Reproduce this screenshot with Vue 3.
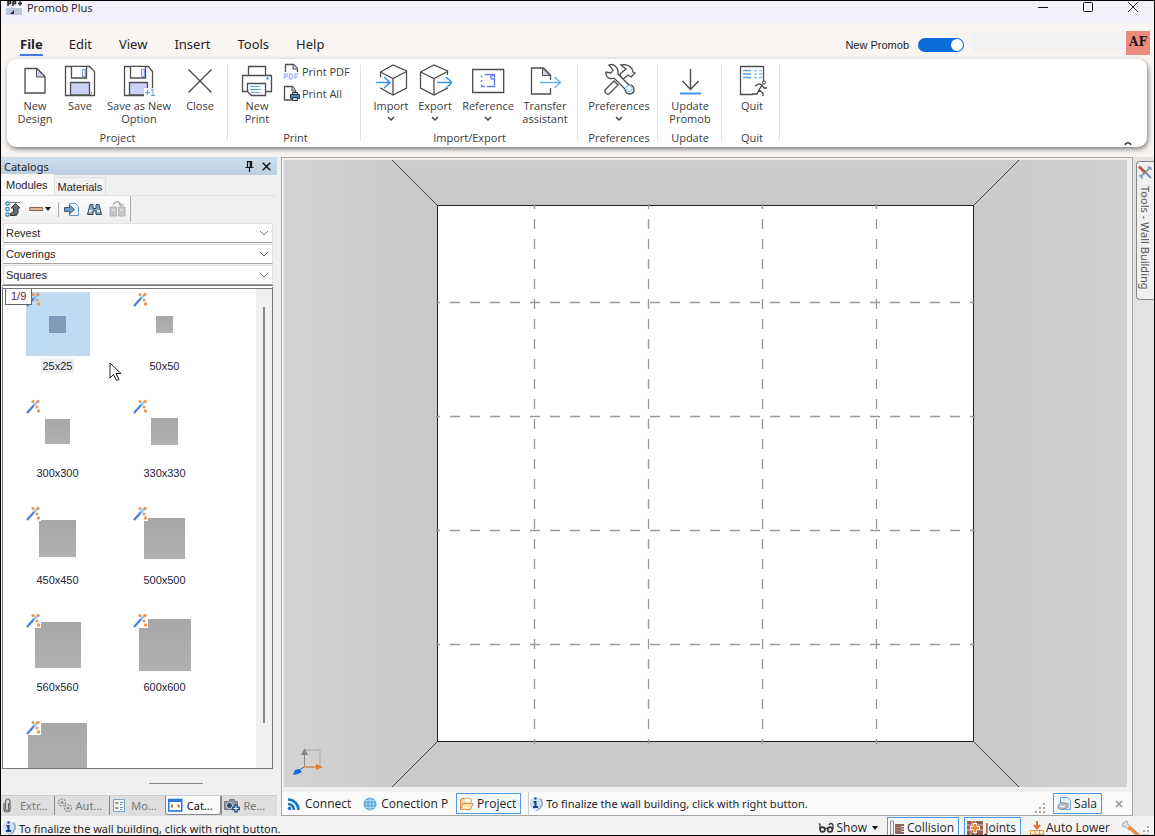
<script setup>
import { ref } from 'vue'

const G = 'fill="#fff" stroke="#4d4d4d" stroke-width="1.3"'
const icons = {
  newDesign: `<path d="M6 3.500h12l8 8v16.500H6z" ${G}/><path d="M17.500 3.500v8.500h8.500z" fill="#ccd0f6" stroke="#4d4d4d"/>`,
  save: `<path d="M1.500 1.500h24l5 5v24h-29z" ${G}/><path d="M7.500 2v11h15V2" ${G}/><path d="M18.500 4.500h3v7h-3z" fill="#e3e8ff" stroke="#7f96ea"/><path d="M6.500 30V17.500h19V30z" fill="#ccd0f6" stroke="#4d4d4d" stroke-width="1.300"/><path d="M27.500 27v2" stroke="#4b8df0"/>`,
  saveAs: `<path d="M1.500 1.500h24l4 5v24h-28z" ${G}/><path d="M7.500 2v11h15V2" ${G}/><path d="M18.500 4.500h3v7h-3z" fill="#e3e8ff" stroke="#7f96ea"/><path d="M6.500 30V17.500h18V30z" fill="#ccd0f6" stroke="#4d4d4d" stroke-width="1.300"/><path d="M21 23h11v9H21z" fill="#fff"/><path d="M22 27.500h5M24.500 25v5M28 25.500l2-1.500v7M28 30.500h4" fill="none" stroke="#4f9be8"/>`,
  close: `<path d="M4.500 4.500l23 23M27.500 4.500l-23 23" stroke="#4d4d4d" stroke-width="1.400"/>`,
  print: `<path d="M7.500 11V1.500h17V11" ${G}/><path d="M1.500 10.500h29v16h-29z" ${G}/><path d="M6.500 18.500h18v12h-14l-4-4z" ${G}/><path d="M9 21.500h10M9 24.500h11M10 27.500h9" stroke="#5aa2ea" stroke-width="1.200"/><circle cx="26.500" cy="13.500" r="1.200" fill="#4a90e2"/>`,
  pdf: `<path d="M2.500 9V1.500h8l4 4V9" ${G}/><path d="M10 1.500v4.500h5" fill="#ccd0f6" stroke="#4d4d4d"/><path d="M1.500 16v-5h2.500v2.500H1.500M6.500 11v5h1.500l1.500-1v-3l-1.500-1zM12 16v-5h3.500M12 13.500h3" fill="none" stroke="#b3bbf5" stroke-width="1.500"/>`,
  printAll: `<path d="M1.500 1.500h8l3 4V15H1.500z" ${G}/><path d="M9 1.500v4.500h4" fill="#ccd0f6" stroke="#4d4d4d"/><path d="M7.500 9.500h9v4h-9z" fill="#4a90c8" stroke="#333"/><path d="M9.500 7.500h5v2h-5zM9.500 12.500h5v3h-5z" fill="#b8dcf5" stroke="#333"/>`,
  import: `<g transform="translate(0 -2)"><path d="M5.500 9L18 2l13.500 6v17L18 32 5.500 25zM5.500 9L18 15.500l13.500-7M18 15.500V32" ${G}/><path d="M4 14.500h3v10H4z" fill="#fff"/><path d="M1 19.500h13.500M9 14l6 5.500-6 5.500" fill="none" stroke="#4292ee" stroke-width="1.600"/></g>`,
  export: `<g transform="translate(0 -2)"><path d="M1.500 9L15 2l13.500 6v17L15 32 1.500 25zM1.500 9L15 15.500l13.500-7M15 15.500V32" ${G}/><path d="M26 12h4v13h-4z" fill="#fff"/><path d="M18 19.500h14M27 14l6 5.500-6 5.500" fill="none" stroke="#4292ee" stroke-width="1.600"/></g>`,
  reference: `<path d="M.700 4.500h31v23h-31z" ${G}/><g fill="none" stroke="#647df0" stroke-width="1.300"><path d="M13 9.500h9.500V14h-3l-1-2 1-1.500h3M9.500 10.500v2M9.500 15v2M9.500 19.500v2H13M15 21.500h7.500V14"/></g>`,
  transfer: `<path d="M21.500 15v-5l-7-7H2.500v26h19v-6" ${G}/><path d="M13.500 3v7.500h7.500z" fill="#ccd0f6" stroke="#4d4d4d"/><path d="M11 17.500h20M25.500 12l6 5.500-6 5.500" fill="none" stroke="#6ab0ec" stroke-width="1.400"/>`,
  prefs: `<g transform="translate(0 -2)"><path d="M2 27l9-9 4 4-9 9c-2 1-5-2-4-4zM17 11l6-5-5-4c4-1 8 0 11 4l1 3 2 1-4 4-3-2-6 5z" ${G}/><path d="M6 2l4 5-2 3-5-1c-1 5 4 8 8 6l11 11c0 3 2 5 5 5 6-1 5-9-1-9L15 11C16 5 11 0 6 2z" ${G}/><circle cx="26" cy="25.500" r="3.300" fill="#eaf4ff" stroke="#74b5ee"/></g>`,
  update: `<path d="M16.500 4v20M8.500 16l8 8.500 8-8.500" fill="none" stroke="#4d4d4d" stroke-width="1.400"/><path d="M6 28.500h21" stroke="#4292ee" stroke-width="2"/>`,
  quit: `<path d="M17 29.500H4.500V1.500h23V16" ${G}/><path d="M7 5.500h8M7 9h8M7 12.500h8" stroke="#5aa2ea" stroke-width="1.600"/><path d="M18 5.500h3M18 9h3M18 12.500h3M23 5.500h3M23 9h3M23 12.500h3" stroke="#8fc0f2" stroke-width="1.600"/><circle cx="28" cy="17.500" r="1.600" fill="none" stroke="#444"/><path d="M19 21l4-2 3 1-3 5 4 3v3M23 25l-2 4h-5M26 20l2 3h3" fill="none" stroke="#444" stroke-width="1.300"/>`,
  wand: `<path d="M1 14L9 5" stroke="#4a7be0" stroke-width="2.200"/><path d="M8 6.500L11 3" stroke="#8fc8ee" stroke-width="2.200"/><g fill="#e8975a"><circle cx="7" cy="2.500" r="1.600"/><circle cx="12" cy="2.500" r="1.700"/><circle cx="11" cy="8" r="1.500"/><circle cx="12.500" cy="12" r="1.700"/></g>`,
  info: `<path d="M8 13l-2 3 5-3z" fill="#9db6d8"/><circle cx="7" cy="7.500" r="6.500" fill="#d3dff0"/><path d="M11.500 2.500c3 4 2 8-2 11" fill="none" stroke="#7f9cc4" stroke-width="1.500"/><path d="M4.500 6h2v5M4 11h5M5.500 2.500h2" fill="none" stroke="#173f8c" stroke-width="2"/>`,
  feed: `<g fill="none" stroke="#1876c4" stroke-width="2.600"><path d="M1 2.500a10.500 10.500 0 0 1 10.500 10.500M1 7a6 6 0 0 1 6 6"/></g><circle cx="2.500" cy="11.500" r="1.800" fill="#1876c4"/>`,
  globe: `<circle cx="7" cy="7" r="6.500" fill="#58a9dd"/><path d="M7 0v14M0 7h14M2 3.500h10M2 10.500h10M7 .500c-5 4-5 9 0 13M7 .500c5 4 5 9 0 13" fill="none" stroke="#b5ddf4" stroke-width=".800"/>`,
  folder: `<path d="M1.500 12V3l1-1.500h4L8 3h4v3" fill="#f6d9a8" stroke="#c98b3f"/><path d="M5 4V1.500h7V6" fill="#fff" stroke="#d8b27c"/><path d="M1.500 12.500L4 6.500h10l-2.500 6z" fill="#ffe6b5" stroke="#d08f40"/>`,
  page: `<path d="M4.500 1.500h7l3 3v9h-10z" fill="#e5f0fb" stroke="#6f9ed2"/><path d="M2 9.500l3-3 7 1v4l-7 2-3-1.500z" fill="#b9bec6" stroke="#8792a0"/><path d="M4 10l5 1" stroke="#fff"/>`,
  clip: `<path d="M3 5v6c0 4 6 4 6 0V4C9 0 4.500 0 4.500 4v7c0 2 3 2 3 0V5" fill="none" stroke="#666" stroke-width="1.200"/>`,
  gears: `<g fill="#ddd" stroke="#8f8f8f" stroke-width="1.200"><circle cx="5" cy="4.500" r="3.500" stroke-dasharray="2 1"/><circle cx="5" cy="4.500" r="1"/><circle cx="11" cy="10" r="3.500" stroke-dasharray="2 1"/><circle cx="11" cy="10" r="1"/></g>`,
  modules: `<path d="M1.500 1.500h11v12h-11z" fill="#eef6fc" stroke="#7ba7cc"/><path d="M3.500 4h2.500v2H3.500zM3.500 9h2.500v2H3.500z" fill="#c07c5a"/><path d="M8 4.500h3M8 6.500h2M8 9.500h3M8 11.500h2" stroke="#7c92a8"/>`,
  catalog: `<path d="M.800 1.500h13v11.500h-13z" fill="#fff" stroke="#1e6fd0" stroke-width="1.400"/><path d="M.500 1h13.500v3H.500z" fill="#2b7ad8"/><path d="M3 7l2-1v3l-2 1zM9.500 6l2 1v3l-2-1z" fill="#a97650"/>`,
  render: `<path d="M.500 3.500h5v-2h5v2h3v8H.500z" fill="#8b959f" stroke="#747d86"/><circle cx="5.500" cy="7.500" r="3" fill="#345" stroke="#dde"/><path d="M8 10.500h8M12 6.500v8" stroke="#175a96" stroke-width="3.600"/><path d="M9.500 10.500h5M12 8v5" stroke="#fff"/>`,
  glasses: `<path d="M2 8V3.500l-1-1M11 4c1-2 3-2 4 0v4" fill="none" stroke="#333" stroke-width="1.300"/><circle cx="4.500" cy="8.500" r="2.400" fill="none" stroke="#333" stroke-width="1.600"/><circle cx="12" cy="8.500" r="2.400" fill="none" stroke="#333" stroke-width="1.600"/><path d="M7 8l2.500-1" stroke="#333" stroke-width="1.300"/>`,
  collision: `<path d="M.500 1h3v14h-3z" fill="#eee" stroke="#999"/><path d="M5 4h9v10H5z" fill="#8e675c"/><path d="M11 6.500h3M11 9h3M11 11.500h3" stroke="#e8d9d3"/><path d="M5 7.500h6M5 10.500h6" stroke="#b08a7e"/>`,
  joints: `<path d="M0 1h16v14H0z" fill="#96604d"/><path d="M0 5h16M0 10h16M5 1v4M11 5v5M4 10v5M8 1v14" stroke="#e3c7b8"/><path d="M3 8h10M8 3v10" stroke="#fff" stroke-width="4"/><path d="M4 8h8M8 4v8" stroke="#ee8237" stroke-width="2.600"/>`,
  lower: `<path d="M7 0v7M4 4l3 3.500L10 4" fill="none" stroke="#df7334" stroke-width="2"/><path d="M.500 9.500h13v4H.500zM5 9.500v4M9.500 9.500v4" fill="#fff2e2" stroke="#e39a4d" stroke-width="1.200"/>`,
  wrench: `<path d="M1 3l4-2 1 3 3 4-2 2-4-3-3-1z" fill="#dedede" stroke="#aaa"/><path d="M8 8l7 6" stroke="#ed8b3c" stroke-width="3.600" stroke-linecap="round"/>`,
  tools: `<path d="M2 12L13 2" stroke="#8ca0c4" stroke-width="2.200"/><path d="M6 6l7 7" stroke="#7d8ba6" stroke-width="1.800"/><path d="M1 1.500L7 7.500" stroke="#b8562c" stroke-width="2.600"/><path d="M10 1l1 3h3M1 10.500l3 .500v3" fill="none" stroke="#8ca0c4" stroke-width="1.500"/>`,
  tree: `<g fill="#fff" stroke="#2a82b8" stroke-width="1.200"><circle cx="2.500" cy="2.500" r="1.700"/><circle cx="2.500" cy="8" r="1.700"/><circle cx="2.500" cy="13.500" r="1.700"/></g><path d="M5 1.500h10M5 14.500h7" stroke="#777"/><path d="M10.500 2.500l4.500 4.500h-2v5.500l-3 2H5.500v-2c2.500-.500 3-2 3-3.500V7H6z" fill="#6c6c6c" stroke="#3a3a3a"/>`,
  board: `<path d="M.700 2.500h13v3h-13z" fill="#e2b49c" stroke="#8f6450"/>`,
  enter: `<path d="M5.500 1.500h6l3 3v9h-9z" fill="#f2f8fd" stroke="#5b9acb"/><path d="M.500 5.500h5V3l5 4.500-5 4.500V9.500h-5z" fill="#6f9cba" stroke="#35607f"/>`,
  find: `<path d="M3 2.500h3v4h3v-4h3l2.500 10H9V9H6v3.500H.500z" fill="#8fa5b8" stroke="#2f4558"/><path d="M2 9h3M10 9h3" stroke="#fff" stroke-width="1.400"/>`,
  swap: `<path d="M1 6h6.500v9H1zM9.500 6H16v9H9.500z" fill="#c6c6c6" stroke="#b4b4b4"/><path d="M4 4c2-4 7-4 8 .500M10 3l2 2 2.500-2" fill="none" stroke="#b5b5b5" stroke-width="1.500"/><path d="M3 9h3M11 9h3" stroke="#eee"/>`
}

const menus = ['File', 'Edit', 'View', 'Insert', 'Tools', 'Help']
const active = ref('File')
const groups = [
  { name: 'Project', cls: 'g-project', items: [
    { t: ['New', 'Design'], icon: 'newDesign', w: 'w54' },
    { t: ['Save'], icon: 'save', w: 'w36' },
    { t: ['Save as New', 'Option'], icon: 'saveAs', w: 'w82' },
    { t: ['Close'], icon: 'close', w: 'w40' }] },
  { name: 'Print', cls: 'g-print', items: [{ t: ['New', 'Print'], icon: 'print', w: 'w46' }],
    small: [{ t: 'Print PDF', icon: 'pdf' }, { t: 'Print All', icon: 'printAll' }] },
  { name: 'Import/Export', cls: 'g-io', items: [
    { t: ['Import'], icon: 'import', w: 'w44', drop: true },
    { t: ['Export'], icon: 'export', w: 'w44', drop: true },
    { t: ['Reference'], icon: 'reference', w: 'w62', drop: true },
    { t: ['Transfer', 'assistant'], icon: 'transfer', w: 'w52' }] },
  { name: 'Preferences', cls: 'g-pref', items: [{ t: ['Preferences'], icon: 'prefs', w: 'w70', drop: true }] },
  { name: 'Update', cls: 'g-update', items: [{ t: ['Update', 'Promob'], icon: 'update', w: 'w54' }] },
  { name: 'Quit', cls: 'g-quit', items: [{ t: ['Quit'], icon: 'quit', w: 'w46' }] }
]
const filters = ['Revest', 'Coverings', 'Squares']
const modules = [
  { n: '25x25', s: 17 }, { n: '50x50', s: 17 },
  { n: '300x300', s: 25 }, { n: '330x330', s: 27 },
  { n: '450x450', s: 37 }, { n: '500x500', s: 41 },
  { n: '560x560', s: 46 }, { n: '600x600', s: 52 },
  { n: '', s: 59 }
]
const selected = ref('25x25')
const dockTabs = [
  { n: 'Extr...', icon: 'clip' }, { n: 'Aut...', icon: 'gears' }, { n: 'Mo...', icon: 'modules' },
  { n: 'Cat...', icon: 'catalog', on: true }, { n: 'Re...', icon: 'render' }
]
const newUi = ref(true)
const hint = 'To finalize the wall building, click with right button.'
const columns = [250.5, 364.5, 478.5, 592.5]
const rows = [142.5, 256.5, 370.5, 484.5]
</script>

<template>
  <div class="window">
    <header class="top">
      <div class="titlebar">
        <svg class="logo" width="16" height="15" viewBox="0 0 16 15"><path d="M0 8h16v7H0z" fill="#bcc9dc" /><path d="M4 14l4-4v4z" fill="#4a1646" /><path d="M2 6V1h2.500v2.500H2M7 6V1h2.500v2.500H7M12 3.500h4M14 1.500v4" fill="none" stroke="#222" stroke-width="1.500" /></svg>
        <span class="app-name">Promob Plus</span>
        <div class="win-buttons">
          <button aria-label="Minimize"><svg width="12" height="12" viewBox="0 0 12 12"><path d="M1 6.500h10" stroke="#111" /></svg></button>
          <button aria-label="Maximize"><svg width="12" height="12" viewBox="0 0 12 12"><rect x="1.500" y="1.500" width="9" height="9" rx="1" fill="none" stroke="#111" /></svg></button>
          <button aria-label="Close"><svg width="12" height="12" viewBox="0 0 12 12"><path d="M1 1l10 10M11 1L1 11" stroke="#222" /></svg></button>
        </div>
      </div>
      <div class="menu-row">
        <nav class="menus">
          <button v-for="m in menus" :key="m" :class="{ on: m === active }" @click="active = m">{{ m }}</button>
        </nav>
        <label class="toggle"><span>New Promob</span><input v-model="newUi" type="checkbox" role="switch"></label>
        <input class="search" type="text" aria-label="Search">
        <button class="avatar">AF</button>
      </div>
      <div class="ribbon">
        <section v-for="g in groups" :key="g.name" class="group" :class="g.cls">
          <div class="tools">
            <button v-for="b in g.items" :key="b.icon" class="tool" :class="b.w">
              <svg width="34" height="34" viewBox="-1 -2 34 34" v-html="icons[b.icon]" />
              <span v-for="line in b.t" :key="line">{{ line }}</span>
              <svg v-if="b.drop" class="drop" width="8" height="6" viewBox="0 0 8 6"><path d="M1 1l3 3 3-3" fill="none" stroke="#444" stroke-width="1.500" /></svg>
            </button>
            <div v-if="g.small" class="small-tools">
              <button v-for="s in g.small" :key="s.t"><svg width="18" height="17" viewBox="0 0 18 17" v-html="icons[s.icon]" />{{ s.t }}</button>
            </div>
          </div>
          <div class="group-name">{{ g.name }}</div>
        </section>
        <button class="collapse" aria-label="Collapse ribbon"><svg width="8" height="6" viewBox="0 0 8 6"><path d="M1 5c1-3 5-3 6 0" fill="none" stroke="#333" stroke-width="1.500" /></svg></button>
      </div>
    </header>

    <main class="body">
      <aside class="dock">
        <div class="dock-title">
          <span>Catalogs</span>
          <button aria-label="Pin"><svg width="9" height="11" viewBox="0 0 9 11"><path d="M2.500 6V.700h4V6M.500 6.500h8M4.500 7v4" fill="none" stroke="#111" stroke-width="1.200" /><path d="M5.500 1v5" stroke="#111" stroke-width="1.500" /></svg></button>
          <button aria-label="Close panel"><svg width="9" height="9" viewBox="0 0 9 9"><path d="M.700.700l7.600 7.600M8.300.700L.700 8.300" stroke="#111" stroke-width="1.500" /></svg></button>
        </div>
        <div class="tabs">
          <button class="on">Modules</button>
          <button>Materials</button>
        </div>
        <div class="toolbar">
          <button aria-label="Up one level"><svg width="17" height="16" viewBox="0 0 17 16" v-html="icons.tree" /></button>
          <button aria-label="Insert board" class="board"><svg width="15" height="8" viewBox="0 0 15 8" v-html="icons.board" /><i class="caret" /></button>
          <i class="sep" />
          <button aria-label="Open"><svg width="16" height="15" viewBox="0 0 16 15" v-html="icons.enter" /></button>
          <button aria-label="Find"><svg width="15" height="15" viewBox="0 0 15 15" v-html="icons.find" /></button>
          <button aria-label="Replace" disabled><svg width="17" height="16" viewBox="0 0 17 16" v-html="icons.swap" /></button>
        </div>
        <div class="filters">
          <div v-for="f in filters" :key="f" class="filter">
            <select :aria-label="f"><option>{{ f }}</option></select>
            <svg width="10" height="6" viewBox="0 0 10 6"><path d="M1 1l4 4 4-4" fill="none" stroke="#777" /></svg>
          </div>
        </div>
        <div class="list">
          <div class="grid">
            <button v-for="m in modules" :key="m.n" class="module" :class="{ sel: m.n === selected }" @click="selected = m.n">
              <span class="thumb">
                <i class="square" :style="{ width: m.s + 'px', height: m.s + 'px' }" />
                <svg class="wand" width="15" height="15" viewBox="0 0 15 15" v-html="icons.wand" />
              </span>
              <span class="name">{{ m.n }}</span>
            </button>
          </div>
          <div class="track"><i /></div>
          <span class="count">1/9</span>
          <svg class="pointer" width="13" height="20" viewBox="0 0 13 20"><path d="M1 1v15l3.500-3.500 3 6 2.500-1-3-6h5z" fill="#fff" stroke="#222" /></svg>
        </div>
        <div class="below"><i /></div>
        <div class="dock-tabs">
          <button v-for="t in dockTabs" :key="t.n" :class="{ on: t.on }"><svg width="16" height="15" viewBox="0 0 16 15" v-html="icons[t.icon]" />{{ t.n }}</button>
        </div>
      </aside>

      <section class="view">
        <svg class="scene" viewBox="0 0 843 627" preserveAspectRatio="xMidYMid slice">
          <defs>
            <linearGradient id="wl"><stop offset="0" stop-color="#d3d3d3" /><stop offset="1" stop-color="#c9c9c9" /></linearGradient>
            <linearGradient id="wr"><stop offset="0" stop-color="#cbcbcb" /><stop offset="1" stop-color="#d0d0d0" /></linearGradient>
            <linearGradient id="wt" x2="0" y2="1"><stop offset="0" stop-color="#cecece" /><stop offset="1" stop-color="#c8c8c8" /></linearGradient>
          </defs>
          <path d="M0 0h108l45 45v537l-45 45H0z" fill="url(#wl)" />
          <path d="M843 0H735l-45 45v537l45 45h108z" fill="url(#wr)" />
          <path d="M108 0h627l-45 45H153z" fill="url(#wt)" />
          <path d="M108 627h627l-45-45H153z" fill="#cacaca" />
          <rect x="153.500" y="45.500" width="536" height="536" fill="#fff" stroke="#222" />
          <path d="M108 0l45 45M735 0l-45 45M153 582l-45 45M690 582l45 45" stroke="#444" />
          <g stroke="#999" stroke-width="1.300" stroke-dasharray="10 10">
            <line v-for="x in columns" :key="x" :x1="x" y1="44" :x2="x" y2="584" stroke-dashoffset="5" />
            <line v-for="y in rows" :key="y" x1="152" :y1="y" x2="691" :y2="y" stroke-dashoffset="6" />
          </g>
          <g fill="none">
            <path d="M20 590h16v17" stroke="#aaa" />
            <path d="M20.500 607v-14" stroke="#888" /><path d="M17 595l3.500-7 3.500 7z" fill="#888" />
            <path d="M20 607h14" stroke="#df8038" stroke-width="1.400" /><path d="M32 604l7 3-7 3z" fill="#df8038" />
            <path d="M20 607l-6 4" stroke="#1767dd" /><path d="M15 609l-4 1-2 5 5-1 4-2z" fill="#1767dd" />
          </g>
        </svg>
        <div class="view-bar">
          <button class="flat"><svg width="14" height="14" viewBox="0 0 14 14" v-html="icons.feed" />Connect</button>
          <button class="flat"><svg width="14" height="14" viewBox="0 0 14 14" v-html="icons.globe" />Conection P</button>
          <button class="boxed project"><svg width="15" height="14" viewBox="0 0 15 14" v-html="icons.folder" />Project</button>
          <div class="view-hint"><svg width="15" height="16" viewBox="0 0 15 16" v-html="icons.info" />{{ hint }}</div>
          <svg class="grip" width="10" height="10" viewBox="0 0 10 10"><path d="M8 0h2v2H8zM4 4h2v2H4zM8 4h2v2H8zM0 8h2v2H0zM4 8h2v2H4zM8 8h2v2H8z" fill="#aaa" /></svg>
          <button class="boxed"><svg width="15" height="15" viewBox="0 0 15 15" v-html="icons.page" />Sala</button>
          <button class="shut" aria-label="Close view"><svg width="8" height="8" viewBox="0 0 8 8"><path d="M1 1l6 6M7 1L1 7" stroke="#999" stroke-width="1.700" /></svg></button>
        </div>
      </section>

      <aside class="rail">
        <button><svg width="15" height="15" viewBox="0 0 15 15" v-html="icons.tools" /><span>Tools - Wall Building</span></button>
      </aside>
    </main>

    <footer class="status">
      <div class="status-hint"><svg width="15" height="16" viewBox="0 0 15 16" v-html="icons.info" />{{ hint }}</div>
      <button class="show"><svg width="17" height="13" viewBox="0 0 17 13" v-html="icons.glasses" />Show<i class="caret" /></button>
      <button class="boxed"><svg width="15" height="15" viewBox="0 0 15 15" v-html="icons.collision" />Collision</button>
      <button class="boxed"><svg width="16" height="15" viewBox="0 0 16 15" v-html="icons.joints" />Joints</button>
      <button class="auto"><svg width="14" height="14" viewBox="0 0 14 14" v-html="icons.lower" />Auto Lower</button>
      <button aria-label="Settings"><svg width="17" height="16" viewBox="0 0 17 16" v-html="icons.wrench" /></button>
      <svg class="grip" width="10" height="10" viewBox="0 0 10 10"><path d="M8 0h2v2H8zM4 4h2v2H4zM8 4h2v2H8zM0 8h2v2H0zM4 8h2v2H4zM8 8h2v2H8z" fill="#aaa" /></svg>
    </footer>
  </div>
</template>

<style>
body { margin: 0; }
</style>

<style scoped>
* { box-sizing: border-box; }
.window {
  display: flex;
  flex-direction: column;
  height: 100vh;
  overflow: hidden;
  border: 1px solid #000;
  background: #f0f0f0;
  color: #1e1e28;
  font: 11px/13px "Open Sans", "Noto Sans", sans-serif;
}
button {
  display: flex;
  align-items: center;
  padding: 0;
  border: 0;
  background: none;
  color: inherit;
  font: inherit;
  white-space: nowrap;
}
svg { display: block; flex: none; }

.top { background: #f9f5f2; padding-bottom: 10px; }
.titlebar { display: flex; height: 22px; padding: 0 0 10px 5px; align-items: center; background: #f3f1fb; }
.app-name { margin-left: 5px; color: #222; }
.win-buttons { display: flex; gap: 33px; margin-left: auto; padding-right: 15px; }
.menu-row { display: flex; align-items: center; height: 36px; padding-top: 4px; }
.menus { display: flex; gap: 26px; margin: 4px auto 0 19px; font: 13px/18px "Noto Sans", "Open Sans", sans-serif; }
.menus button { padding-bottom: 1px; border-bottom: 2px solid transparent; }
.menus button:nth-child(n+3) { padding-left: 1px; }
.menus button.on { border-color: #4778e0; font-weight: 700; }
.toggle { display: flex; align-items: center; gap: 9px; padding-top: 3px; font: 11px/14px "Liberation Sans", Arial, sans-serif; }
.toggle input {
  appearance: none;
  display: flex;
  justify-content: flex-end;
  width: 46px;
  height: 14px;
  margin: 0;
  padding: 1px;
  border-radius: 7px;
  background: #0b6cd8;
}
.toggle input::before { content: ""; width: 12px; height: 12px; border-radius: 6px; background: #fff; }
.toggle input:not(:checked) { justify-content: flex-start; background: #888; }
.search { width: 151px; height: 20px; margin: 0 3px 4px 8px; padding: 0; border: 0; background: #f3f2f2; }
.avatar { width: 24px; height: 24px; margin: 0 4px 0 0; padding-bottom: 2px; justify-content: center; background: #ec8a7d; color: #111; font: 700 12px/14px "DejaVu Serif", serif; }
.ribbon { display: flex; position: relative; height: 88px; margin: 0 7px 0 6px; padding-top: 4px; border-radius: 9px; background: #fff; box-shadow: 1px 2px 5px #777; color: #3c3c3c; }
.group { display: flex; flex-direction: column; position: relative; }
.group::after { content: ""; width: 1px; background: #e4e0dd; position: absolute; right: 0; top: 2px; bottom: 6px; }
.tools { display: flex; height: 68px; }
.tool { flex-direction: column; }
.tool .drop { margin-top: 4px; }
.tool svg:first-child { margin-bottom: 2px; }
.small-tools { display: flex; flex-direction: column; gap: 5px; padding: 0 0 0 3px; }
.small-tools button { gap: 1px; height: 17px; }
.group-name { text-align: center; }
.g-project { width: 221px; }
.g-project .tools { padding-left: 1px; }
.g-print { width: 133px; padding-left: 6px; }
.g-print .group-name { margin-left: -4px; }
.g-io { width: 217px; }
.g-io .tools { padding-left: 8px; }
.g-pref { width: 80px; padding-left: 2px; align-items: center; }
.g-update { width: 64px; align-items: center; }
.g-quit { width: 58px; padding-left: 2px; align-items: center; }
.w36 { width: 36px; } .w40 { width: 40px; } .w44 { width: 44px; } .w46 { width: 46px; }
.w52 { width: 52px; } .w54 { width: 54px; } .w62 { width: 62px; } .w70 { width: 70px; } .w82 { width: 82px; }
.collapse { margin: auto 15px 1px auto; }

.body { display: flex; flex: 1; min-height: 0; background: #f0f0f0; }
.dock { display: flex; flex-direction: column; width: 276px; margin-right: 4px; font: 11px/14px "Liberation Sans", Arial, sans-serif; }
.dock-title { display: flex; align-items: center; gap: 8px; height: 18px; padding: 0 6px 0 3px; background: linear-gradient(#cddeee, #bccddf); font: 11px/13px "Noto Sans", sans-serif; }
.dock-title span { margin-right: auto; }
.tabs { display: flex; align-items: flex-end; height: 21px; border-bottom: 1px solid #e2e2e2; }
.tabs button { height: 18px; padding: 0 3px; border: 1px solid #e0e0e0; border-bottom: 0; background: #f2f2f2; }
.tabs .on { height: 21px; padding: 0 6px 0 5px; border: 0; background: #fafafa; }
.toolbar { display: flex; align-items: center; align-self: flex-start; gap: 7px; height: 26px; padding: 0 4px 0 4px; border-right: 1px solid #aaa; background: linear-gradient(#fdfdfd, #efefef); }
.toolbar .board { gap: 1px; }
.caret { border: 3px solid transparent; border-top: 4px solid #111; border-bottom: 0; }
.sep { width: 1px; height: 15px; margin-right: -2px; background: #aaa; }
.filters { display: flex; flex-direction: column; gap: 1px; padding: 1px 4px 0 2px; }
.filter { display: flex; align-items: center; position: relative; height: 20px; border: 1px solid #e2e2e2; border-bottom-color: #a5a5a5; background: #fff; }
.filter select { appearance: none; width: 100%; height: 18px; padding: 0 2px; border: 0; background: none; color: inherit; font: inherit; }
.filter svg { position: absolute; right: 3px; pointer-events: none; }
.list { display: flex; flex: 1; min-height: 0; position: relative; margin: 0 4px 0 1px; border: 1px solid #777; border-top: 4px double #777; background: #fff; overflow: hidden; }
.grid { display: grid; grid-template-columns: repeat(2, 107px); grid-auto-rows: 107px; flex: 1; padding: 3px 0 0 1px; }
.module { flex-direction: column; }
.thumb { display: flex; position: relative; align-items: center; justify-content: center; width: 64px; height: 64px; }
.square { background: linear-gradient(#a7a7a7, #b1b1b1); }
.wand { position: absolute; left: 0; top: 0; background: #fff; }
.name { margin-top: 3px; padding: 0 2px; color: #222238; }
.sel .thumb { background: #bedbf3; }
.sel .square { background: #7e9cb9; }
.sel .wand { background: none; }
.sel .name { background: #eee; }
.track { width: 16px; padding: 18px 0 45px 7px; background: #f0f0f0; }
.track i { display: block; width: 2px; height: 100%; background: #888; }
.count { position: absolute; left: 2px; top: -1px; padding: 0 5px 1px; border: 1px solid #666; background: #fff; color: #5a2a1a; }
.pointer { position: absolute; left: 106px; top: 73px; }
.below { height: 26px; padding: 14px 0 0 148px; }
.below i { display: block; width: 54px; height: 1px; background: #888; }
.dock-tabs { display: flex; height: 21px; padding-bottom: 1px; background: #dedede; border-top: 1px solid #ccc; color: #777; font: 11px/13px "Noto Sans", sans-serif; }
.dock-tabs button { flex: 1; min-width: 0; gap: 3px; padding-left: 2px; border-left: 1px solid #888; }
.dock-tabs button:first-child { border-left: 0; padding-left: 0; }
.dock-tabs .on { border: 1px solid #888; border-top: 0; border-radius: 0 0 3px 3px; background: #fafafa; color: #111; }

.view { display: flex; flex-direction: column; flex: 1; min-width: 0; border: 1px solid #a5a5a5; background: #f0f0f0; }
.scene { flex: 1; min-height: 0; width: calc(100% - 7px); margin: 2px 5px 0 2px; }
.view-bar { display: flex; align-items: center; height: 23px; margin-top: 5px; padding-left: 5px; background: #fafafa; font-size: 12px; line-height: 14px; }
.view-bar button { gap: 4px; }
.status button { gap: 2px; }
.flat { margin-right: 12px; }
.boxed { height: 21px; padding: 0 4px 0 2px; border: 1px solid #4a9bea; background: #f6f9fc; }
.view-bar .boxed { gap: 3px; }
.project { margin-left: -4px; }
.view-hint { display: flex; align-items: center; gap: 2px; height: 23px; margin-left: 7px; border-left: 1px solid #ccc; font: 11px/13px "Noto Sans", sans-serif; white-space: nowrap; }
.view-bar .grip { margin: 8px 8px 0 auto; }
.shut { margin: 0 9px 0 13px; }

.rail { width: 21px; padding: 4px 0 0 3px; background: #e3e3e3; }
.rail button { flex-direction: column; gap: 6px; width: 18px; height: 139px; padding-top: 3px; border: 1px solid #888; border-right: 0; border-radius: 4px 0 0 4px; background: #f0f0f0; color: #555; font: 11px/13px "Noto Sans", sans-serif; }
.rail span { writing-mode: vertical-rl; }

.status { display: flex; align-items: flex-start; height: 19px; padding: 1px 5px 0 1px; background: #f3f3f3; font-size: 12px; line-height: 14px; }
.status button { height: 21px; flex: none; }
.status-hint { display: flex; align-items: center; gap: 2px; margin: 3px auto 0 0; font: 11px/13px "Noto Sans", sans-serif; white-space: nowrap; }
.show { margin-right: 9px; }
.show .caret { margin-left: 3px; }
.status .boxed { margin-right: 5px; }
.status .auto { margin: 0 12px 0 4px; }
.status .grip { margin-top: 9px; }
</style>
